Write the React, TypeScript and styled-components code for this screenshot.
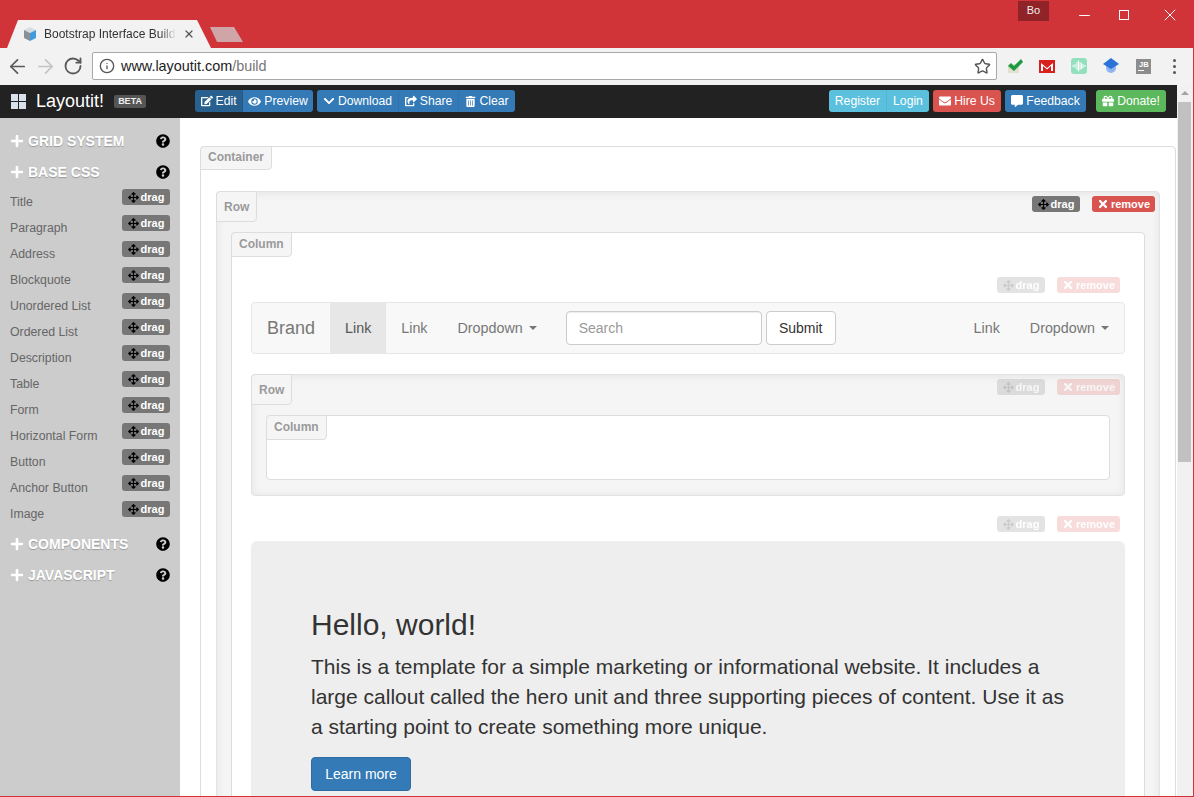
import React from 'react';
import styled, { createGlobalStyle } from 'styled-components';
import { ArrowLeft, ArrowRight, Info, Minus, RotateCw, Star, X } from 'lucide-react';
import {
    FaArrowsAlt,
    FaChevronDown,
    FaCommentAlt,
    FaEdit,
    FaEnvelope,
    FaEye,
    FaGift,
    FaPlus,
    FaQuestionCircle,
    FaShareSquare,
    FaTimes,
    FaTrashAlt,
} from 'react-icons/fa';

const GlobalStyle = createGlobalStyle`
    html, body {
        margin: 0;
        padding: 0;
        height: 100%;
        overflow: hidden;
        background: #fff;
    }
    body {
        font-family: "Liberation Sans", Arial, sans-serif;
        font-size: 14px;
        color: #333;
    }
    * {
        box-sizing: border-box;
    }
`;

const Window = styled.div`
    display: flex;
    flex-direction: column;
    width: 1194px;
    height: 797px;
    overflow: hidden;
    border-right: 1px solid #d13438;
    border-bottom: 1px solid #d13438;
`;

const TitleBar = styled.div`
    display: flex;
    justify-content: space-between;
    align-items: flex-start;
    flex: none;
    height: 48px;
    background: #d13438;
`;

const TabStrip = styled.div`
    display: flex;
    align-items: flex-end;
    height: 48px;
    padding-left: 7px;
`;

const Tab = styled.div`
    display: flex;
    align-items: center;
    width: 204px;
    height: 28px;
    padding: 0 14px 0 15px;
    background: #f2f2f2;
    clip-path: polygon(0 100%, 11px 0, 190px 0, 100% 100%);
`;

const TabTitle = styled.span`
    flex: none;
    width: 132px;
    margin-left: 6px;
    white-space: nowrap;
    font-size: 12px;
    line-height: 16px;
    color: #333;
    -webkit-mask-image: linear-gradient(to right, #000 88%, transparent);
    mask-image: linear-gradient(to right, #000 88%, transparent);
`;

const TabClose = styled(X)`
    flex: none;
    margin-left: 7px;
    color: #555;
`;

const NewTab = styled.div`
    width: 33px;
    height: 15px;
    margin: 0 0 6px -1px;
    background: #cfa5a8;
    clip-path: polygon(0 0, 24px 0, 100% 100%, 7px 100%);
`;

const WindowControls = styled.div`
    display: flex;
    align-items: flex-start;
    color: #fff;
`;

const Profile = styled.div`
    width: 31px;
    height: 20px;
    margin: 1px 18px 0 0;
    background: #8f2327;
    color: #eee;
    font-size: 11px;
    line-height: 19px;
    text-align: center;
`;

const WindowButton = styled.div<{ $width: number }>`
    display: flex;
    align-items: center;
    justify-content: center;
    width: ${(p) => p.$width}px;
    height: 30px;
`;

const MaximizeBox = styled.i`
    display: block;
    width: 10px;
    height: 10px;
    border: 1px solid #fff;
`;

const BrowserBar = styled.div`
    display: flex;
    align-items: center;
    flex: none;
    height: 37px;
    padding: 0 0 1px 3px;
    background: #f2f2f2;
`;

const NavIcon = styled.div<{ $off?: boolean }>`
    display: flex;
    align-items: center;
    justify-content: center;
    width: 28px;
    color: ${(p) => (p.$off ? '#c4c4c4' : '#5a5a5a')};
`;

const AddressBar = styled.div`
    display: flex;
    align-items: center;
    width: 905px;
    height: 28px;
    margin: 0 2px 0 5px;
    padding: 0 5px 0 6px;
    background: #fff;
    border: 1px solid #a9a9a9;
    border-radius: 2px;
    color: #555;
`;

const Url = styled.span`
    flex: 1;
    margin-left: 6px;
    font-size: 14.4px;
    color: #222;

    > span {
        color: #777;
    }
`;

const Extensions = styled.div`
    display: flex;
    align-items: center;
`;

const Extension = styled.div`
    display: flex;
    align-items: center;
    justify-content: center;
    width: 32px;
`;

const MenuDots = styled.div`
    display: flex;
    flex-direction: column;
    gap: 3px;
    margin-left: 14px;

    > i {
        display: block;
        width: 3px;
        height: 3px;
        background: #555;
        border-radius: 50%;
    }
`;

const Viewport = styled.div`
    display: flex;
    flex: 1;
    min-height: 0;
`;

const Page = styled.div`
    display: flex;
    flex-direction: column;
    flex: 1;
    min-width: 0;
`;

const Scrollbar = styled.div`
    display: flex;
    flex-direction: column;
    align-items: center;
    flex: none;
    width: 16px;
    padding-top: 6px;
    background: #f1f1f1;
`;

const ScrollArrow = styled.div`
    width: 0;
    height: 0;
    border-left: 4px solid transparent;
    border-right: 4px solid transparent;
    border-bottom: 4px solid #a3a3a3;
`;

const ScrollThumb = styled.div`
    width: 13px;
    height: 360px;
    margin: 7px 1px 0 0;
    background: #c1c1c1;
`;

const TopNav = styled.div`
    display: flex;
    align-items: center;
    flex: none;
    height: 33px;
    padding: 0 11px 1px;
    background: #222;
`;

const Logo = styled.svg`
    width: 15px;
    height: 15px;
    margin-right: 10px;
`;

const LogoText = styled.span`
    font-size: 18px;
    color: #fff;
`;

const Beta = styled.span`
    width: 32px;
    height: 13px;
    margin: 0 49px 0 10px;
    background: #555;
    border-radius: 2px;
    color: #eee;
    font-size: 9px;
    font-weight: bold;
    line-height: 13px;
    text-align: center;
`;

const BtnGroup = styled.div<{ $gap?: number; $auto?: boolean }>`
    display: flex;
    margin-right: ${(p) => p.$gap ?? 4}px;
    margin-left: ${(p) => (p.$auto ? 'auto' : '0')};
`;

const colors: Record<string, string> = {
    primary: '#337ab7',
    active: '#286090',
    info: '#5bc0de',
    danger: '#d9534f',
    success: '#5cb85c',
};

const NavBtn = styled.div<{ $color?: string; $width: number }>`
    display: flex;
    align-items: center;
    justify-content: center;
    gap: 3px;
    width: ${(p) => p.$width}px;
    height: 22px;
    border-right: 1px solid rgba(0, 0, 0, 0.06);
    background: ${(p) => colors[p.$color ?? 'primary']};
    color: #fff;
    font-size: 12.2px;
    white-space: nowrap;

    &:first-child {
        border-radius: 3px 0 0 3px;
    }
    &:last-child {
        border-right: 0;
        border-radius: 0 3px 3px 0;
    }
    &:only-child {
        border-radius: 3px;
    }
`;

const Body = styled.div`
    display: flex;
    flex: 1;
    min-height: 0;
`;

const Sidebar = styled.aside`
    flex: none;
    width: 180px;
    padding: 7px 10px 0;
    background: #ccc;
`;

const SideHeader = styled.div<{ $gap?: number }>`
    display: flex;
    align-items: center;
    height: 31px;
    margin-top: ${(p) => p.$gap ?? 0}px;
    color: #fff;
    font-size: 14px;
    font-weight: bold;
    text-shadow: 0 1px 1px rgba(0, 0, 0, 0.25);

    > span {
        flex: 1;
        margin-left: 4px;
    }

    > svg:last-child {
        color: #000;
    }
`;

const SideList = styled.div`
    margin-top: 1px;
`;

const SideItem = styled.div`
    display: flex;
    justify-content: space-between;
    align-items: flex-start;
    height: 26px;
    padding-top: 1px;
    color: #666;
    font-size: 12.3px;
    line-height: 26px;
`;

const Badge = styled.span<{ $danger?: boolean }>`
    display: inline-flex;
    align-items: center;
    justify-content: center;
    gap: 2px;
    width: ${(p) => (p.$danger ? 63 : 48)}px;
    height: 16px;
    background: ${(p) => (p.$danger ? '#d9534f' : '#777')};
    border-radius: 3px;
    color: #fff;
    font-size: 11px;
    font-weight: bold;
    line-height: 16px;

    > svg {
        color: ${(p) => (p.$danger ? '#fff' : '#000')};
    }
`;

const Main = styled.main`
    flex: 1;
    min-width: 0;
    overflow: hidden;
    padding: 28px 1px 0 20px;
    background: #fff;
`;

const Container = styled.section`
    display: flex;
    flex-direction: column;
    height: 700px;
    padding: 0 15px;
    border: 1px solid #ddd;
    border-radius: 4px;
`;

const Tag = styled.div<{ $height: number; $line: number }>`
    align-self: flex-start;
    flex: none;
    height: ${(p) => p.$height}px;
    padding: 0 7px;
    margin: -1px 0 0 -1px;
    background: #f5f5f5;
    border: 1px solid #ddd;
    border-radius: 4px 0 4px 0;
    color: #9a9a9a;
    font-size: 12px;
    font-weight: bold;
    line-height: ${(p) => p.$line}px;
`;

const ContainerTag = styled(Tag)`
    margin: -1px 0 21px -16px;
`;

const RowBox = styled.div`
    position: relative;
    display: flex;
    flex-direction: column;
    padding: 0 14px 15px;
    background: #f5f5f5;
    border: 1px solid #e3e3e3;
    border-radius: 4px;
    box-shadow: inset 0 1px 8px rgba(0, 0, 0, 0.08);
`;

const RowTag = styled(Tag)`
    margin: -1px 0 10px -15px;
`;

const ColumnBox = styled.div<{ $height?: number }>`
    display: flex;
    flex-direction: column;
    min-height: ${(p) => p.$height ?? 0}px;
    padding: 0 19px 20px;
    background: #fff;
    border: 1px solid #ddd;
    border-radius: 4px;
`;

const ColumnTag = styled(Tag)`
    margin: -1px 0 0 -20px;
`;

const Actions = styled.div<{ $faded?: boolean }>`
    display: flex;
    justify-content: flex-end;
    gap: 12px;
    opacity: ${(p) => (p.$faded ? 0.2 : 1)};
`;

const RowActions = styled(Actions)`
    position: absolute;
    top: 4px;
    right: 4px;
`;

const FlowActions = styled(Actions)`
    margin: 20px 5px 9px 0;
`;

const Navbar = styled.nav`
    display: flex;
    align-items: stretch;
    height: 52px;
    background: #f8f8f8;
    border: 1px solid #e7e7e7;
    border-radius: 4px;
    color: #777;
`;

const Brand = styled.div`
    display: flex;
    align-items: center;
    padding: 0 15px;
    font-size: 18px;
`;

const NavLink = styled.div<{ $active?: boolean }>`
    display: flex;
    align-items: center;
    padding: 0 15px;
    background: ${(p) => (p.$active ? '#e7e7e7' : 'transparent')};
    color: ${(p) => (p.$active ? '#555' : '#777')};
    font-size: 14.3px;
`;

const Caret = styled.i`
    width: 0;
    height: 0;
    margin-left: 6px;
    border-top: 4px solid #777;
    border-left: 4px solid transparent;
    border-right: 4px solid transparent;
`;

const NavForm = styled.div`
    display: flex;
    align-items: center;
    gap: 4px;
    flex: 1;
    padding: 0 14px;
`;

const SearchBox = styled.div`
    width: 196px;
    height: 34px;
    padding: 0 12px;
    background: #fff;
    border: 1px solid #ccc;
    border-radius: 4px;
    box-shadow: inset 0 1px 1px rgba(0, 0, 0, 0.075);
    color: #999;
    line-height: 32px;
`;

const SubmitBtn = styled.div`
    width: 70px;
    height: 34px;
    background: #fff;
    border: 1px solid #ccc;
    border-radius: 4px;
    color: #333;
    line-height: 32px;
    text-align: center;
`;

const InnerRow = styled(RowBox)`
    margin-top: 20px;
`;

const Jumbotron = styled.div`
    height: 300px;
    padding: 60px;
    background: #eee;
    border-radius: 6px;

    > h1 {
        margin: 0 0 3px;
        font-size: 30px;
        font-weight: 400;
        line-height: 48px;
        color: #333;
    }

    > p {
        margin: 0 0 15px;
        font-size: 21px;
        line-height: 30px;
        color: #333;
    }
`;

const LearnMore = styled.div`
    width: 100px;
    height: 34px;
    background: #337ab7;
    border: 1px solid #2e6da4;
    border-radius: 4px;
    color: #fff;
    line-height: 32px;
    text-align: center;
`;

const sideItems = [
    'Title',
    'Paragraph',
    'Address',
    'Blockquote',
    'Unordered List',
    'Ordered List',
    'Description',
    'Table',
    'Form',
    'Horizontal Form',
    'Button',
    'Anchor Button',
    'Image',
];

const DragBadge = () => (
    <Badge>
        <FaArrowsAlt size={11} />
        drag
    </Badge>
);

const RemoveBadge = () => (
    <Badge $danger>
        <FaTimes size={12} />
        remove
    </Badge>
);

const Favicon = () => (
    <svg width="16" height="16" viewBox="0 0 16 16">
        <path d="M8 1 14 4 8 7 2 4Z" fill="#d8dde0" />
        <path d="M2 4 8 7V15L2 12Z" fill="#8a9094" />
        <path d="M8 7 14 4V12L8 15Z" fill="#3f9bdc" />
    </svg>
);

const SideSection = ({ title, gap }: { title: string; gap?: number }) => (
    <SideHeader $gap={gap}>
        <FaPlus size={14} />
        <span>{title}</span>
        <FaQuestionCircle size={14} />
    </SideHeader>
);

export default function App() {
    return (
        <>
            <GlobalStyle />
            <Window>
                <TitleBar>
                    <TabStrip>
                        <Tab>
                            <Favicon />
                            <TabTitle>Bootstrap Interface Build</TabTitle>
                            <TabClose size={12} strokeWidth={2.5} />
                        </Tab>
                        <NewTab />
                    </TabStrip>
                    <WindowControls>
                        <Profile>Bo</Profile>
                        <WindowButton $width={34}>
                            <Minus size={17} strokeWidth={1.4} />
                        </WindowButton>
                        <WindowButton $width={46}>
                            <MaximizeBox />
                        </WindowButton>
                        <WindowButton $width={46}>
                            <X size={20} strokeWidth={1.2} />
                        </WindowButton>
                    </WindowControls>
                </TitleBar>
                <BrowserBar>
                    <NavIcon>
                        <ArrowLeft size={23} strokeWidth={1.8} />
                    </NavIcon>
                    <NavIcon $off>
                        <ArrowRight size={23} strokeWidth={1.8} />
                    </NavIcon>
                    <NavIcon>
                        <RotateCw size={20} strokeWidth={2.2} />
                    </NavIcon>
                    <AddressBar>
                        <Info size={16} strokeWidth={2} />
                        <Url>
                            www.layoutit.com<span>/build</span>
                        </Url>
                        <Star size={17} strokeWidth={2} />
                    </AddressBar>
                    <Extensions>
                        <Extension>
                            <svg width="18" height="16" viewBox="0 0 18 16">
                                <path d="M2 6H13V15H2Z" fill="#e3e0d0" />
                                <path d="M2 8 5 5 8 8 15 1 17 4 8 13Z" fill="#1b9a3f" />
                            </svg>
                        </Extension>
                        <Extension>
                            <svg width="16" height="13" viewBox="0 0 16 13">
                                <path d="M0 0H16V13H0Z" fill="#d8211d" />
                                <path d="M2 3 8 8 14 3V11H12V6L8 9.5 4 6V11H2Z" fill="#fff" />
                            </svg>
                        </Extension>
                        <Extension>
                            <svg width="16" height="16" viewBox="0 0 16 16">
                                <rect width="16" height="16" rx="3" fill="#93e0bd" />
                                <path
                                    d="M2 7V9M4 6V10M6 4V12M7.5 2.5V13.5M9 4V12M10.500 5V11M12 6V10M14 7V9"
                                    stroke="#fff"
                                    strokeWidth="1"
                                />
                            </svg>
                        </Extension>
                        <Extension>
                            <svg width="16" height="16" viewBox="0 0 16 16">
                                <circle cx="8" cy="10" r="5" fill="#8fb4f0" />
                                <path d="M0 6 8 0 16 6 8 11Z" fill="#2a72d8" />
                            </svg>
                        </Extension>
                        <Extension>
                            <svg width="15" height="15" viewBox="0 0 15 15">
                                <rect width="15" height="15" fill="#8c8c8c" />
                                <text x="3" y="8" fontSize="7.500" fontWeight="bold" fill="#fff" fontFamily="Liberation Sans">
                                    JB
                                </text>
                                <rect x="2" y="11" width="6" height="1" fill="#fff" />
                            </svg>
                        </Extension>
                        <MenuDots>
                            <i />
                            <i />
                            <i />
                        </MenuDots>
                    </Extensions>
                </BrowserBar>
                <Viewport>
                    <Page>
                        <TopNav>
                            <Logo viewBox="0 0 15 15">
                                <path d="M0 0H7V7H0ZM8 0H15V7H8ZM0 8H7V15H0ZM8 8H15V15H8Z" fill="#d9e2ea" />
                            </Logo>
                            <LogoText>Layoutit!</LogoText>
                            <Beta>BETA</Beta>
                            <BtnGroup>
                                <NavBtn $color="active" $width={48}>
                                    <FaEdit size={12} />
                                    Edit
                                </NavBtn>
                                <NavBtn $width={70}>
                                    <FaEye size={13} />
                                    Preview
                                </NavBtn>
                            </BtnGroup>
                            <BtnGroup $gap={0}>
                                <NavBtn $width={82}>
                                    <FaChevronDown size={12} />
                                    Download
                                </NavBtn>
                                <NavBtn $width={60}>
                                    <FaShareSquare size={12} />
                                    Share
                                </NavBtn>
                                <NavBtn $width={56}>
                                    <FaTrashAlt size={11} />
                                    Clear
                                </NavBtn>
                            </BtnGroup>
                            <BtnGroup $auto>
                                <NavBtn $color="info" $width={58}>
                                    Register
                                </NavBtn>
                                <NavBtn $color="info" $width={42}>
                                    Login
                                </NavBtn>
                            </BtnGroup>
                            <BtnGroup>
                                <NavBtn $color="danger" $width={68}>
                                    <FaEnvelope size={12} />
                                    Hire Us
                                </NavBtn>
                            </BtnGroup>
                            <BtnGroup $gap={10}>
                                <NavBtn $width={81}>
                                    <FaCommentAlt size={12} />
                                    Feedback
                                </NavBtn>
                            </BtnGroup>
                            <BtnGroup $gap={0}>
                                <NavBtn $color="success" $width={70}>
                                    <FaGift size={12} />
                                    Donate!
                                </NavBtn>
                            </BtnGroup>
                        </TopNav>
                        <Body>
                            <Sidebar>
                                <SideSection title="GRID SYSTEM" />
                                <SideSection title="BASE CSS" />
                                <SideList>
                                    {sideItems.map((item) => (
                                        <SideItem key={item}>
                                            {item}
                                            <DragBadge />
                                        </SideItem>
                                    ))}
                                </SideList>
                                <SideSection title="COMPONENTS" gap={2} />
                                <SideSection title="JAVASCRIPT" />
                            </Sidebar>
                            <Main>
                                <Container>
                                    <ContainerTag $height={24} $line={21}>
                                        Container
                                    </ContainerTag>
                                    <RowBox>
                                        <RowTag $height={31} $line={31}>
                                            Row
                                        </RowTag>
                                        <RowActions>
                                            <DragBadge />
                                            <RemoveBadge />
                                        </RowActions>
                                        <ColumnBox>
                                            <ColumnTag $height={25} $line={22}>
                                                Column
                                            </ColumnTag>
                                            <FlowActions $faded>
                                                <DragBadge />
                                                <RemoveBadge />
                                            </FlowActions>
                                            <Navbar>
                                                <Brand>Brand</Brand>
                                                <NavLink $active>Link</NavLink>
                                                <NavLink>Link</NavLink>
                                                <NavLink>
                                                    Dropdown
                                                    <Caret />
                                                </NavLink>
                                                <NavForm>
                                                    <SearchBox>Search</SearchBox>
                                                    <SubmitBtn>Submit</SubmitBtn>
                                                </NavForm>
                                                <NavLink>Link</NavLink>
                                                <NavLink>
                                                    Dropdown
                                                    <Caret />
                                                </NavLink>
                                            </Navbar>
                                            <InnerRow>
                                                <RowTag $height={31} $line={31}>
                                                    Row
                                                </RowTag>
                                                <RowActions $faded>
                                                    <DragBadge />
                                                    <RemoveBadge />
                                                </RowActions>
                                                <ColumnBox $height={65}>
                                                    <ColumnTag $height={25} $line={22}>
                                                        Column
                                                    </ColumnTag>
                                                </ColumnBox>
                                            </InnerRow>
                                            <FlowActions $faded>
                                                <DragBadge />
                                                <RemoveBadge />
                                            </FlowActions>
                                            <Jumbotron>
                                                <h1>Hello, world!</h1>
                                                <p>
                                                    This is a template for a simple marketing or informational website. It
                                                    includes a large callout called the hero unit and three supporting pieces
                                                    of content. Use it as a starting point to create something more unique.
                                                </p>
                                                <LearnMore>Learn more</LearnMore>
                                            </Jumbotron>
                                        </ColumnBox>
                                    </RowBox>
                                </Container>
                            </Main>
                        </Body>
                    </Page>
                    <Scrollbar>
                        <ScrollArrow />
                        <ScrollThumb />
                    </Scrollbar>
                </Viewport>
            </Window>
        </>
    );
}
